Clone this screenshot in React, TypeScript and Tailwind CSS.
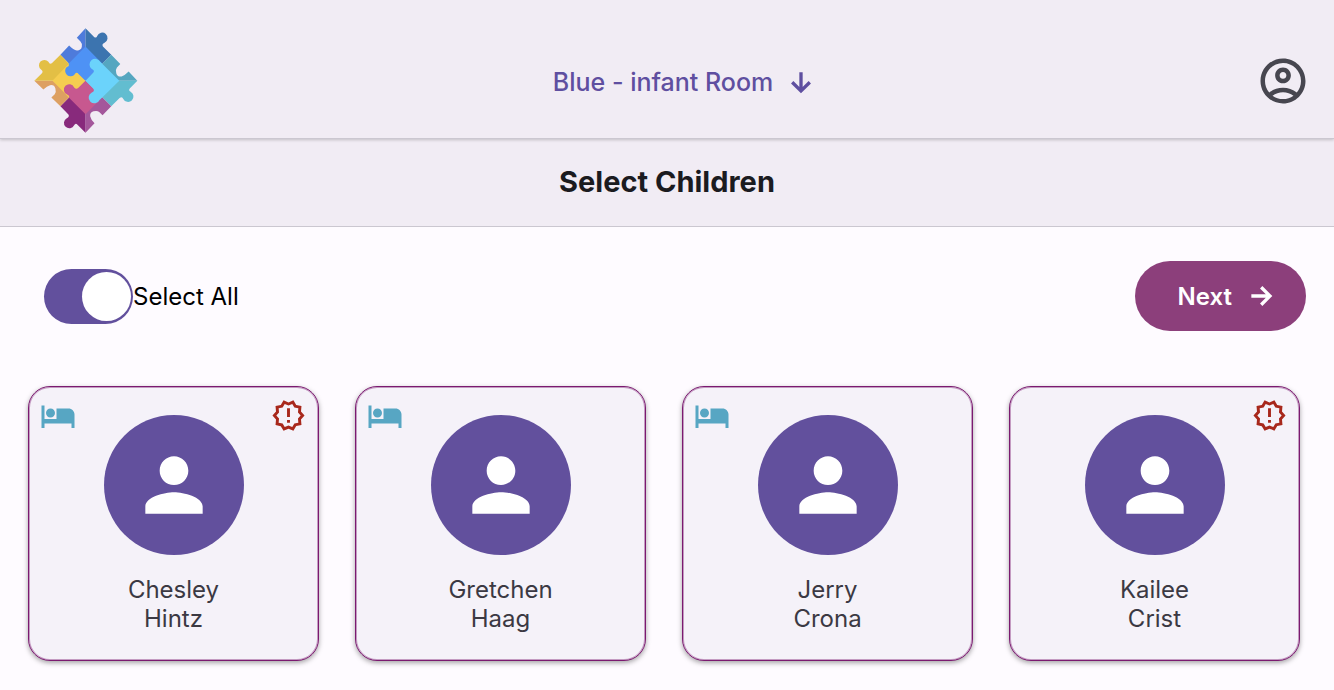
import { useState } from "react";
import { MdHotel, MdOutlineAccountCircle, MdOutlineNewReleases, MdPerson } from "react-icons/md";

type Child = {
  firstName: string;
  lastName: string;
  sleeping: boolean;
  alert: boolean;
};

const children: Child[] = [
  { firstName: "Chesley", lastName: "Hintz", sleeping: true, alert: true },
  { firstName: "Gretchen", lastName: "Haag", sleeping: true, alert: false },
  { firstName: "Jerry", lastName: "Crona", sleeping: true, alert: false },
  { firstName: "Kailee", lastName: "Crist", sleeping: false, alert: true },
];

const PuzzleLogo = () => (
  <svg viewBox="40 42 312 314" className="size-[105px]" role="img" aria-label="Home">
    {/* Top piece */}
    <path fill="#4e7bdb" d="M196 43 170 71 181 82Q187 88 185 98A13 13 0 0 1 170 109Q160 107 147 94L121 122 196 200Z" />
    <path fill="#3c74af" d="M196 43 221 68Q228 74 231 66A16 16 0 1 1 253 86Q244 90 248 97L273 122 196 200Z" />
    {/* Right piece */}
    <path fill="#55a6c0" d="M273 122 300 150 290 160Q285 166 288 177A14 14 0 0 0 304 187Q313 184 325 172L351 200H196Z" />
    <path fill="#62bdd0" d="M351 200 329 222Q323 228 331 233A16 16 0 1 1 309 254Q306 246 298 251L273 276 196 200Z" />
    {/* Bottom piece */}
    <path fill="#a4579b" d="M273 276 247 303 237 293Q231 288 220 291A14 14 0 0 0 210 306Q212 316 223 327L196 355V200Z" />
    <path fill="#882a7c" d="M196 355 172 331Q166 325 162 333A16 16 0 1 1 140 312Q149 308 145 301L121 276 196 200Z" />
    {/* Left piece */}
    <path fill="#dda062" d="M121 276 94 250 104 240Q109 234 106 223A14 14 0 0 0 90 213Q81 215 70 226L43 200H196Z" />
    <path fill="#e3bf45" d="M43 200 65 178Q71 171 63 166A16 16 0 1 1 85 143Q89 153 96 147L121 122 196 200Z" />
    {/* Inner diamond */}
    <path fill="#f5cd50" d="M146 149 97 200 121 224 146 250 196 200Z" />
    <path fill="#4e92f5" d="M196 97 246 148 196 200 176 180Q169 172 164 180A16 16 0 1 1 140 159Q150 155 145 149Z" />
    <path fill="#c7588f" d="M196 200 175 221Q168 227 162 220A16 16 0 1 0 141 241Q150 245 146 250L196 300 246 250Z" />
    <path fill="#6bd3fb" d="M297 200 240 143A17 17 0 1 0 214 164Q225 169 219 176L196 200 219 223Q225 230 215 235A17 17 0 1 0 238 257L246 250Z" />
  </svg>
);

const ArrowIcon = ({ className }: { className?: string }) => (
  <svg
    viewBox="0 0 24 24"
    fill="none"
    stroke="currentColor"
    strokeWidth={2.5}
    aria-hidden="true"
    className={`size-8 ${className ?? ""}`}
  >
    <path d="M4 12H18M11.4 5.4 18 12 11.4 18.6" />
  </svg>
);

const ChildCard = ({ child, selected, onToggle }: { child: Child; selected: boolean; onToggle: () => void }) => (
  <button
    type="button"
    aria-pressed={selected}
    onClick={onToggle}
    className={`relative flex flex-col items-center rounded-[22px] border bg-[#f5f2f9] px-4 pt-7 pb-[27px] shadow-[0_2px_5px_rgba(0,0,0,0.35)] ${
      selected ? "border-[#7b1a70] ring-1 ring-inset ring-[#7b1a70]/40" : "border-transparent"
    }`}
  >
    {child.sleeping && <MdHotel title="Sleeping" className="absolute top-[11px] left-[11px] size-9 text-[#57a6c3]" />}
    {child.alert && (
      <MdOutlineNewReleases title="Alert" className="absolute top-[11px] right-3 size-[35px] text-[#a8281c]" />
    )}
    <span className="flex size-[140px] items-center justify-center rounded-full bg-[#62509d]">
      <MdPerson className="size-[86px] text-white" />
    </span>
    <span className="mt-5 text-2xl leading-[29px] text-[#3b3943]">
      {child.firstName}
      <br />
      {child.lastName}
    </span>
  </button>
);

const App = () => {
  const [selected, setSelected] = useState<boolean[]>(children.map(() => true));
  const allSelected = selected.every(Boolean);

  const toggleChild = (index: number) => {
    setSelected((prev) => prev.map((value, i) => (i === index ? !value : value)));
  };

  return (
    <div className="min-h-screen bg-[#fefbff] font-['Inter',sans-serif] text-[#1b1b1f]">
      <header className="relative grid grid-cols-[1fr_auto_1fr] items-center border-b border-[#cbc7d0] bg-[#f1ecf4] px-6 pt-7 pb-[5px] shadow-[0_1px_3px_rgba(0,0,0,0.2)]">
        <a href="#" className="ml-[9px] justify-self-start">
          <PuzzleLogo />
        </a>
        <button type="button" className="flex items-center gap-3 pt-1 pl-9 text-[25px] font-medium text-[#5f4fa0]">
          Blue - infant Room
          <ArrowIcon className="rotate-90" />
        </button>
        <button type="button" aria-label="Account" className="justify-self-end text-[#47464f]">
          <MdOutlineAccountCircle className="size-[54px]" />
        </button>
      </header>

      <div className="border-b border-[#cbc7d0] bg-[#f1ecf4] pt-[23px] pb-6">
        <h1 className="text-center text-[29px] leading-10 font-bold">Select Children</h1>
      </div>

      <main className="pt-[34px] pr-[34px] pb-7 pl-7">
        <div className="-mr-1.5 flex items-center justify-between pl-4">
          <label className="flex cursor-pointer items-center text-2xl text-black">
            <input
              type="checkbox"
              role="switch"
              checked={allSelected}
              onChange={(e) => setSelected(children.map(() => e.target.checked))}
              className="flex h-[55px] w-[89px] appearance-none items-center rounded-full bg-[#b9b5c3] px-0.5 before:size-[49px] before:rounded-full before:bg-white checked:justify-end checked:bg-[#62509d]"
            />
            <span className="pt-0.5">Select All</span>
          </label>
          <button
            type="button"
            className="flex h-[70px] items-center gap-3.5 rounded-full bg-[#8c3f7b] pr-7 pl-[43px] text-2xl font-semibold text-white"
          >
            <span className="pt-0.5">Next</span>
            <ArrowIcon />
          </button>
        </div>

        <div className="mt-[55px] grid grid-cols-4 gap-9">
          {children.map((child, index) => (
            <ChildCard
              key={child.firstName}
              child={child}
              selected={selected[index]}
              onToggle={() => toggleChild(index)}
            />
          ))}
        </div>
      </main>
    </div>
  );
};

export default App;
